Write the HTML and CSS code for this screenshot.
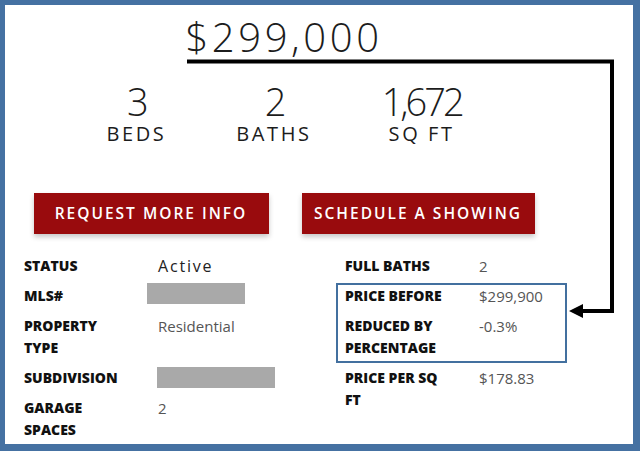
FILE: index.html
```html
<!DOCTYPE html>
<html lang="en">
<head>
    <meta charset="UTF-8">
    <meta name="viewport" content="width=device-width, initial-scale=1.0">
    <title>Listing Price Change</title>
    <link rel="stylesheet" href="styles.css">
</head>
<body>

    <div class="frame">
        <div class="listing">
            <div class="price">$299,000</div>

            <div class="stats">
                <div class="stat">
                    <div class="stat-num">3</div>
                    <div class="stat-label">BEDS</div>
                </div>
                <div class="stat">
                    <div class="stat-num">2</div>
                    <div class="stat-label">BATHS</div>
                </div>
                <div class="stat">
                    <div class="stat-num">1,672</div>
                    <div class="stat-label">SQ FT</div>
                </div>
            </div>

            <div class="actions">
                <a class="btn btn-info" href="#">REQUEST MORE INFO</a>
                <a class="btn btn-showing" href="#">SCHEDULE A SHOWING</a>
            </div>

            <div class="details">
                <div class="detail-col">
                    <div class="row">
                        <span class="label">STATUS</span>
                        <span class="value status">Active</span>
                    </div>
                    <div class="row">
                        <span class="label">MLS#</span>
                        <span class="value"><span class="redacted redacted-mls"></span></span>
                    </div>
                    <div class="row">
                        <span class="label">PROPERTY TYPE</span>
                        <span class="value">Residential</span>
                    </div>
                    <div class="row">
                        <span class="label">SUBDIVISION</span>
                        <span class="value"><span class="redacted redacted-sub"></span></span>
                    </div>
                    <div class="row">
                        <span class="label">GARAGE SPACES</span>
                        <span class="value">2</span>
                    </div>
                </div>

                <div class="detail-col">
                    <div class="row">
                        <span class="label">FULL BATHS</span>
                        <span class="value">2</span>
                    </div>
                    <!-- the price drop we want to point at -->
                    <div class="highlight">
                        <div class="row">
                            <span class="label">PRICE BEFORE</span>
                            <span class="value">$299,900</span>
                        </div>
                        <div class="row">
                            <span class="label">REDUCED BY PERCENTAGE</span>
                            <span class="value">-0.3%</span>
                        </div>
                    </div>
                    <div class="row">
                        <span class="label">PRICE PER SQ FT</span>
                        <span class="value">$178.83</span>
                    </div>
                </div>
            </div>
        </div>

        <svg class="annotation" width="640" height="451" viewBox="0 0 640 451">
            <path d="M187 61.5 H612 V311 H580" fill="none" stroke="#000" stroke-width="4"/>
            <polygon points="569,311 583,304 583,318" fill="#000"/>
        </svg>
    </div>

</body>
</html>
```

FILE: styles.css
```css
body {
    margin: 0;
    font-family: "Open Sans", Arial, sans-serif;
    background-color: #fff;
    color: #222;
}
.frame {
    position: relative;
    width: 640px;
    height: 451px;
    box-sizing: border-box;
    border-style: solid;
    border-color: #4571a2;
    border-width: 5px 7px 7px 5px;
    background-color: #fff;
    overflow: hidden;
}
.listing {
    width: 520px;
    margin-left: 19px;
}
.price {
    padding-top: 8px;
    text-align: center;
    font-size: 40px;
    line-height: 48px;
    font-weight: 300;
    letter-spacing: 3.6px;
    color: #1c1c1c;
}
.stats {
    display: flex;
    justify-content: center;
    gap: 70px;
    margin-top: 19px;
}
.stat {
    text-align: center;
}
.stat-num {
    font-size: 38px;
    line-height: 42px;
    font-weight: 300;
    letter-spacing: -3px;
    color: #1c1c1c;
}
.stat-label {
    font-size: 20px;
    line-height: 24px;
    font-weight: 500;
    letter-spacing: 2.6px;
    color: #1c1c1c;
}
.actions {
    display: flex;
    justify-content: center;
    gap: 33px;
    margin-top: 47px;
}
.btn {
    display: block;
    height: 41px;
    line-height: 41px;
    text-align: center;
    background-color: #990b0d;
    color: #fff;
    text-decoration: none;
    font-size: 15.5px;
    font-weight: 600;
    letter-spacing: 2px;
    box-shadow: 0 3px 5px rgba(0, 0, 0, 0.22);
}
.btn-info {
    width: 235px;
}
.btn-showing {
    width: 233px;
}
.details {
    display: grid;
    grid-template-columns: 321px 1fr;
    margin-top: 21px;
}
.detail-col {
    display: flex;
    flex-direction: column;
    gap: 8px;
}
.row {
    display: grid;
    grid-template-columns: 110px 1fr;
    column-gap: 24px;
    line-height: 22px;
}
.label {
    font-size: 14px;
    font-weight: 800;
    color: #111;
}
.value {
    font-size: 15px;
    font-weight: 400;
    color: #555;
}
.status {
    font-size: 16px;
    letter-spacing: 1.8px;
    color: #222;
}
.redacted {
    display: block;
    height: 21px;
    background-color: #a9a9a9;
}
.redacted-mls {
    width: 98px;
    margin-left: -11px;
    margin-top: -2px;
}
.redacted-sub {
    width: 118px;
    margin-left: -1px;
}
.highlight {
    display: flex;
    flex-direction: column;
    gap: 8px;
    width: 220px;
    margin: -2px 0 -4px -9px;
    padding: 0 0 2px 7px;
    border: 2px solid #43709f;
}
.annotation {
    position: absolute;
    left: -5px;
    top: -5px;
    pointer-events: none;
}
```
